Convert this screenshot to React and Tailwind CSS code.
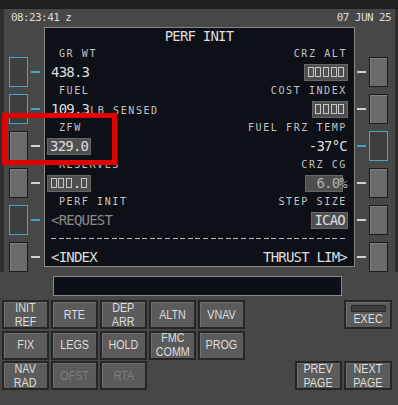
import React from 'react';

const mono = "font-[family-name:DejaVu_Sans_Mono,monospace]";

function Lsk({ cyan, right }) {
  const btn = cyan
    ? "w-[19px] h-[30px] border-[1.5px] border-[#3aa8c6] bg-[#3e3e3e]"
    : "w-[19px] h-[30px] border border-[#1b1b1b] bg-[#6a6a6a] shadow-[inset_1px_1px_0_#7f7f7f]";
  const dash = cyan ? "w-[9px] h-[2px] bg-[#3aa8c6]" : "w-[9px] h-[2px] bg-[#d2d2d2]";
  if (right) {
    return (
      <div className="flex items-center h-[30px]">
        <div className={dash} />
        <div className={"ml-[3px] " + btn} />
      </div>
    );
  }
  return (
    <div className="flex items-center h-[30px]">
      <div className={btn} />
      <div className={"ml-[3px] " + dash} />
    </div>
  );
}

function Boxes({ n }) {
  return Array.from({ length: n }).map((_, i) => (
    <span key={i} className="inline-block w-[6px] h-[10px] mx-[0.8px] border border-[#c8c8c8] align-middle" />
  ));
}

function Hl({ children, className }) {
  return (
    <span className={"inline-flex items-center h-[15px] px-[2px] bg-[#4f4f4f] outline outline-1 outline-[#666] " + (className || '')}>
      {children}
    </span>
  );
}

function Label({ children, className }) {
  return <span className={"text-[10px] tracking-[1.6px] text-[#c4c4c4] " + (className || '')}>{children}</span>;
}

function Key({ children, dim, className }) {
  return (
    <div className={"h-[29px] flex items-center justify-center border-2 border-[#262626] bg-[#5b5b5b] shadow-[inset_1px_1px_0_#6f6f6f] " + (className || '')}>
      <span className={"inline-block scale-x-[0.86] text-center font-[family-name:Liberation_Sans,sans-serif] text-[12.5px] leading-[14px] " + (dim ? "text-[#7d7d7d]" : "text-[#dedede]")}>
        {children}
      </span>
    </div>
  );
}

export default function App() {
  const rows = [
    {
      ll: <Label className="pl-[8px]">GR WT</Label>,
      rl: <Label>CRZ ALT</Label>,
      ld: <span>438.3</span>,
      rd: <Hl><Boxes n={5} /></Hl>,
    },
    {
      ll: <Label className="pl-[8px]">FUEL</Label>,
      rl: <Label>COST INDEX</Label>,
      ld: <span>109.3<Label className="ml-[1px]">LB SENSED</Label></span>,
      rd: <Hl><Boxes n={4} /></Hl>,
    },
    {
      ll: <Label className="pl-[8px]">ZFW</Label>,
      rl: <Label>FUEL FRZ TEMP</Label>,
      ld: <Hl className="-ml-[3px]">329.0</Hl>,
      rd: <span>-37°C</span>,
    },
    {
      ll: <Label className="pl-[8px]">RESERVES</Label>,
      rl: <Label>CRZ CG</Label>,
      ld: <Hl className="-ml-[3px]"><Boxes n={3} />.<Boxes n={1} /></Hl>,
      rd: <span className="text-[#b0b0b0]"><Hl className="pl-[10px] pr-[3px]">6.0</Hl><span className="-ml-[3px]">%</span></span>,
    },
    {
      ll: <Label className="pl-[8px] text-[#5f5f5f]">PERF INIT</Label>,
      rl: <Label>STEP SIZE</Label>,
      ld: <span className="text-[#8a8a8a]">&lt;REQUEST</span>,
      rd: <Hl>ICAO</Hl>,
    },
  ];

  return (
    <div className={"relative w-[398px] h-[405px] bg-[#474747] overflow-hidden " + mono}>
      <div className="h-[9px] bg-[#1e1e1e]" />
      <div className="border-l-[4px] border-r-[3px] border-[#2e2e2e]">
        <div className="h-[18px] flex items-center justify-between pl-[7px] pr-[4px] text-[11px] tracking-[-0.6px] text-[#dcdcdc]">
          <span>08:23:41 z</span>
          <span>07 JUN 25</span>
        </div>

        <div className="flex">
          <div className="w-[40px] pl-[5px] pt-[30px] flex flex-col gap-[7px]">
            <Lsk cyan />
            <Lsk cyan />
            <Lsk />
            <Lsk />
            <Lsk cyan />
            <Lsk />
          </div>

          <div className="w-[311px] h-[240px] border border-[#888] bg-[#0d1016] pl-[6px] pr-[7px] text-[14px] tracking-[-0.8px] text-[#dedede]">
            <div className="h-[17px] flex items-center justify-center">PERF INIT</div>
            {rows.map((r, i) => (
              <div key={i}>
                <div className="h-[17px] flex items-center justify-between">
                  {r.ll}
                  {r.rl}
                </div>
                <div className="h-[20px] flex items-center justify-between">
                  {r.ld}
                  {r.rd}
                </div>
              </div>
            ))}
            <div className="h-[17px] flex items-center">
              <div className="w-full h-[1.5px] bg-[repeating-linear-gradient(90deg,#bdbdbd_0_5px,transparent_5px_7.6px)]" />
            </div>
            <div className="h-[20px] flex items-center justify-between">
              <span>&lt;INDEX</span>
              <span>THRUST LIM&gt;</span>
            </div>
          </div>

          <div className="ml-[2px] pt-[30px] flex flex-col gap-[7px]">
            <Lsk right />
            <Lsk right />
            <Lsk right cyan />
            <Lsk right />
            <Lsk right />
            <Lsk right />
          </div>
        </div>
      </div>

      <div className="mt-[4px] ml-[53px] w-[289px] h-[20px] border border-[#8a8a8a] bg-[#0c1016]" />

      <div className="mt-[4px] flex">
        <div className="ml-[2px] grid grid-cols-[repeat(5,47px)] gap-x-[2px] gap-y-[1.5px]">
          <Key>INIT<br />REF</Key>
          <Key>RTE</Key>
          <Key>DEP<br />ARR</Key>
          <Key>ALTN</Key>
          <Key>VNAV</Key>
          <Key>FIX</Key>
          <Key>LEGS</Key>
          <Key>HOLD</Key>
          <Key>FMC<br />COMM</Key>
          <Key>PROG</Key>
          <Key>NAV<br />RAD</Key>
          <Key dim>OFST</Key>
          <Key dim>RTA</Key>
        </div>
        <div className="ml-auto mr-[6px] w-[97px] h-[90px] flex flex-col justify-between items-end">
          <div className="w-[48px] h-[29px] flex flex-col items-center border-2 border-[#262626] bg-[#5b5b5b] shadow-[inset_1px_1px_0_#6f6f6f]">
            <div className="mt-[3px] w-[35px] h-[7px] border border-[#2a2a2a] bg-[#3d3d3d]" />
            <span className="inline-block scale-x-[0.86] font-[family-name:Liberation_Sans,sans-serif] text-[12.5px] leading-[14px] text-[#dedede]">EXEC</span>
          </div>
          <div className="flex gap-[2px]">
            <Key className="w-[47px]">PREV<br />PAGE</Key>
            <Key className="w-[48px]">NEXT<br />PAGE</Key>
          </div>
        </div>
      </div>

      <div className="absolute left-[2px] top-[113px] w-[115px] h-[52px] border-[5px] border-[#e30000]" />
    </div>
  );
}
